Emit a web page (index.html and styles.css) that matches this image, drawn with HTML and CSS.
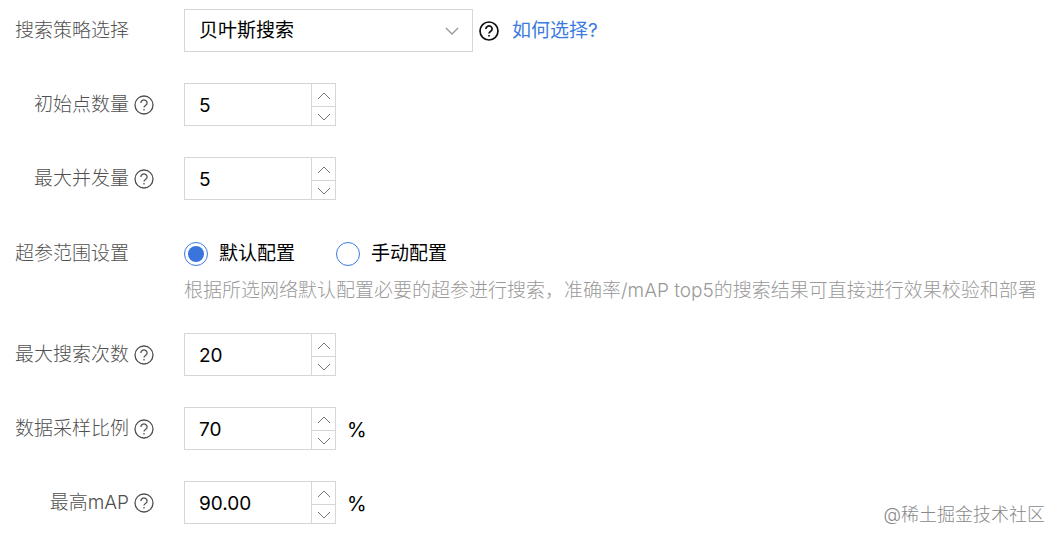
FILE: index.html
```html
<!DOCTYPE html>
<html lang="zh-CN">
<head>
<meta charset="utf-8">
<meta name="viewport" content="width=device-width, initial-scale=1">
<title>搜索策略</title>
<link rel="stylesheet" href="styles.css">
</head>
<body>
<svg class="sprite" aria-hidden="true">
  <symbol id="help" viewBox="0 0 20 20"><circle cx="10" cy="10" r="9"/><path d="M6.9 7.9a3.1 2.9 0 1 1 4.8 2.4c-1 .7-1.7 1.1-1.7 2.3"/><path d="M10 14.1v1.5"/></symbol>
  <symbol id="up" viewBox="0 0 14 8"><path d="M1 7l6-6 6 6"/></symbol>
  <symbol id="down" viewBox="0 0 14 8"><path d="M1 1l6 6 6-6"/></symbol>
</svg>
<form class="form">
  <div class="row">
    <div class="label"><label for="strategy">搜索策略选择</label></div>
    <div class="control">
      <div class="select-box">
        <select id="strategy" class="select"><option>贝叶斯搜索</option></select>
        <svg class="chevron"><use href="#down"/></svg>
      </div>
      <svg class="help help-dark"><use href="#help"/></svg>
      <a class="link" href="#">如何选择?</a>
    </div>
  </div>
  <div class="row">
    <div class="label"><label for="initial">初始点数量</label><svg class="help"><use href="#help"/></svg></div>
    <div class="control">
      <div class="stepper">
        <input id="initial" class="number" type="text" inputmode="numeric" value="5">
        <div class="steps"><button type="button" class="step" aria-label="增加"><svg class="arrow"><use href="#up"/></svg></button><button type="button" class="step" aria-label="减少"><svg class="arrow"><use href="#down"/></svg></button></div>
      </div>
    </div>
  </div>
  <div class="row">
    <div class="label"><label for="parallel">最大并发量</label><svg class="help"><use href="#help"/></svg></div>
    <div class="control">
      <div class="stepper">
        <input id="parallel" class="number" type="text" inputmode="numeric" value="5">
        <div class="steps"><button type="button" class="step" aria-label="增加"><svg class="arrow"><use href="#up"/></svg></button><button type="button" class="step" aria-label="减少"><svg class="arrow"><use href="#down"/></svg></button></div>
      </div>
    </div>
  </div>
  <div class="row" role="radiogroup" aria-labelledby="range">
    <div class="label label-range"><span id="range">超参范围设置</span></div>
    <div class="range">
      <div class="options">
        <label class="option"><input class="radio" type="radio" name="range" checked>默认配置</label>
        <label class="option"><input class="radio" type="radio" name="range">手动配置</label>
      </div>
      <p class="note">根据所选网络默认配置必要的超参进行搜索，准确率/mAP top5的搜索结果可直接进行效果校验和部署</p>
    </div>
  </div>
  <div class="row">
    <div class="label"><label for="times">最大搜索次数</label><svg class="help"><use href="#help"/></svg></div>
    <div class="control">
      <div class="stepper">
        <input id="times" class="number" type="text" inputmode="numeric" value="20">
        <div class="steps"><button type="button" class="step" aria-label="增加"><svg class="arrow"><use href="#up"/></svg></button><button type="button" class="step" aria-label="减少"><svg class="arrow"><use href="#down"/></svg></button></div>
      </div>
    </div>
  </div>
  <div class="row">
    <div class="label"><label for="ratio">数据采样比例</label><svg class="help"><use href="#help"/></svg></div>
    <div class="control">
      <div class="stepper">
        <input id="ratio" class="number" type="text" inputmode="numeric" value="70">
        <div class="steps"><button type="button" class="step" aria-label="增加"><svg class="arrow"><use href="#up"/></svg></button><button type="button" class="step" aria-label="减少"><svg class="arrow"><use href="#down"/></svg></button></div>
      </div>
      <span class="unit">%</span>
    </div>
  </div>
  <div class="row">
    <div class="label"><label for="map">最高mAP</label><svg class="help"><use href="#help"/></svg></div>
    <div class="control">
      <div class="stepper">
        <input id="map" class="number" type="text" inputmode="decimal" value="90.00">
        <div class="steps"><button type="button" class="step" aria-label="增加"><svg class="arrow"><use href="#up"/></svg></button><button type="button" class="step" aria-label="减少"><svg class="arrow"><use href="#down"/></svg></button></div>
      </div>
      <span class="unit">%</span>
    </div>
  </div>
</form>
<div class="watermark">@稀土掘金技术社区</div>
</body>
</html>
```
FILE: styles.css
```css
* { box-sizing: border-box; }

body {
  margin: 0;
  position: relative;
  background: #fff;
  color: #000;
  font-family: Inter, "Noto Sans CJK SC", sans-serif;
  font-size: 19px;
  line-height: 22px;
}

.sprite { display: none; }

svg {
  display: block;
  flex: none;
  fill: none;
  stroke: currentColor;
}

.form {
  display: flex;
  flex-direction: column;
  gap: 31px;
  padding: 9px 16px 18px 15px;
}

.row {
  display: grid;
  grid-template-columns: 139px 1fr;
  column-gap: 30px;
  align-items: start;
}

.label {
  display: flex;
  align-items: center;
  justify-content: flex-end;
  gap: 5px;
  height: 43px;
  color: #505050;
  font-weight: 300;
  white-space: nowrap;
}

.label:not(:has(.help)) { justify-content: flex-start; }
.label-range { height: 45px; }
.label label,
.label span { padding-top: 1px; }

.help {
  width: 20px;
  height: 20px;
  stroke-width: 1.3;
}

.help-dark {
  margin-left: 6px;
  color: #111;
  stroke-width: 1.7;
}

.control {
  display: flex;
  align-items: center;
  height: 43px;
}

.select-box {
  display: grid;
  align-items: center;
  width: 289px;
  height: 43px;
}

.select,
.chevron { grid-area: 1 / 1; }

.select {
  width: 100%;
  height: 100%;
  padding: 1px 40px 0 14px;
  border: 1px solid #d6d6d6;
  border-radius: 0;
  background: #fff;
  color: #000;
  font: inherit;
  appearance: none;
}

.chevron {
  justify-self: end;
  width: 14px;
  height: 8px;
  margin-right: 14px;
  color: #999;
  stroke-width: 1.4;
  pointer-events: none;
}

.link {
  margin-left: 13px;
  padding-top: 1px;
  color: #3a7be0;
  text-decoration: none;
}

.stepper {
  display: flex;
  width: 152px;
  height: 43px;
  border: 1px solid #d6d6d6;
}

.number {
  flex: 1;
  min-width: 0;
  padding: 3px 0 0 14px;
  border: 0;
  background: none;
  color: #000;
  font: inherit;
}

.steps {
  display: grid;
  grid-template-rows: 22px 1fr;
  width: 24px;
  border-left: 1px solid #d6d6d6;
}

.step {
  display: grid;
  place-items: center;
  padding: 2px 0 0;
  border: 0;
  background: none;
  color: #777;
}

.step + .step { border-top: 1px solid #d6d6d6; }

.arrow {
  width: 14px;
  height: 8px;
  stroke-width: 1;
}

.unit {
  margin-left: 11px;
  padding-top: 3px;
  font-size: 20px;
}

.options {
  display: flex;
  align-items: center;
  gap: 41px;
  height: 45px;
}

.option {
  display: flex;
  align-items: center;
  gap: 11px;
}

.radio {
  display: grid;
  place-items: center;
  width: 24px;
  height: 24px;
  margin: 0;
  border: 1px solid #3a7be0;
  border-radius: 50%;
  background: #fff;
  appearance: none;
}

.radio:checked::before {
  width: 16px;
  height: 16px;
  border-radius: 50%;
  background: #3a75dd;
  content: "";
}

.note {
  margin: 0;
  padding-top: 4px;
  color: #999;
  font-weight: 300;
}

.watermark {
  position: absolute;
  right: 17px;
  bottom: 16px;
  color: #888;
  font-size: 18px;
  font-weight: 300;
}
```
